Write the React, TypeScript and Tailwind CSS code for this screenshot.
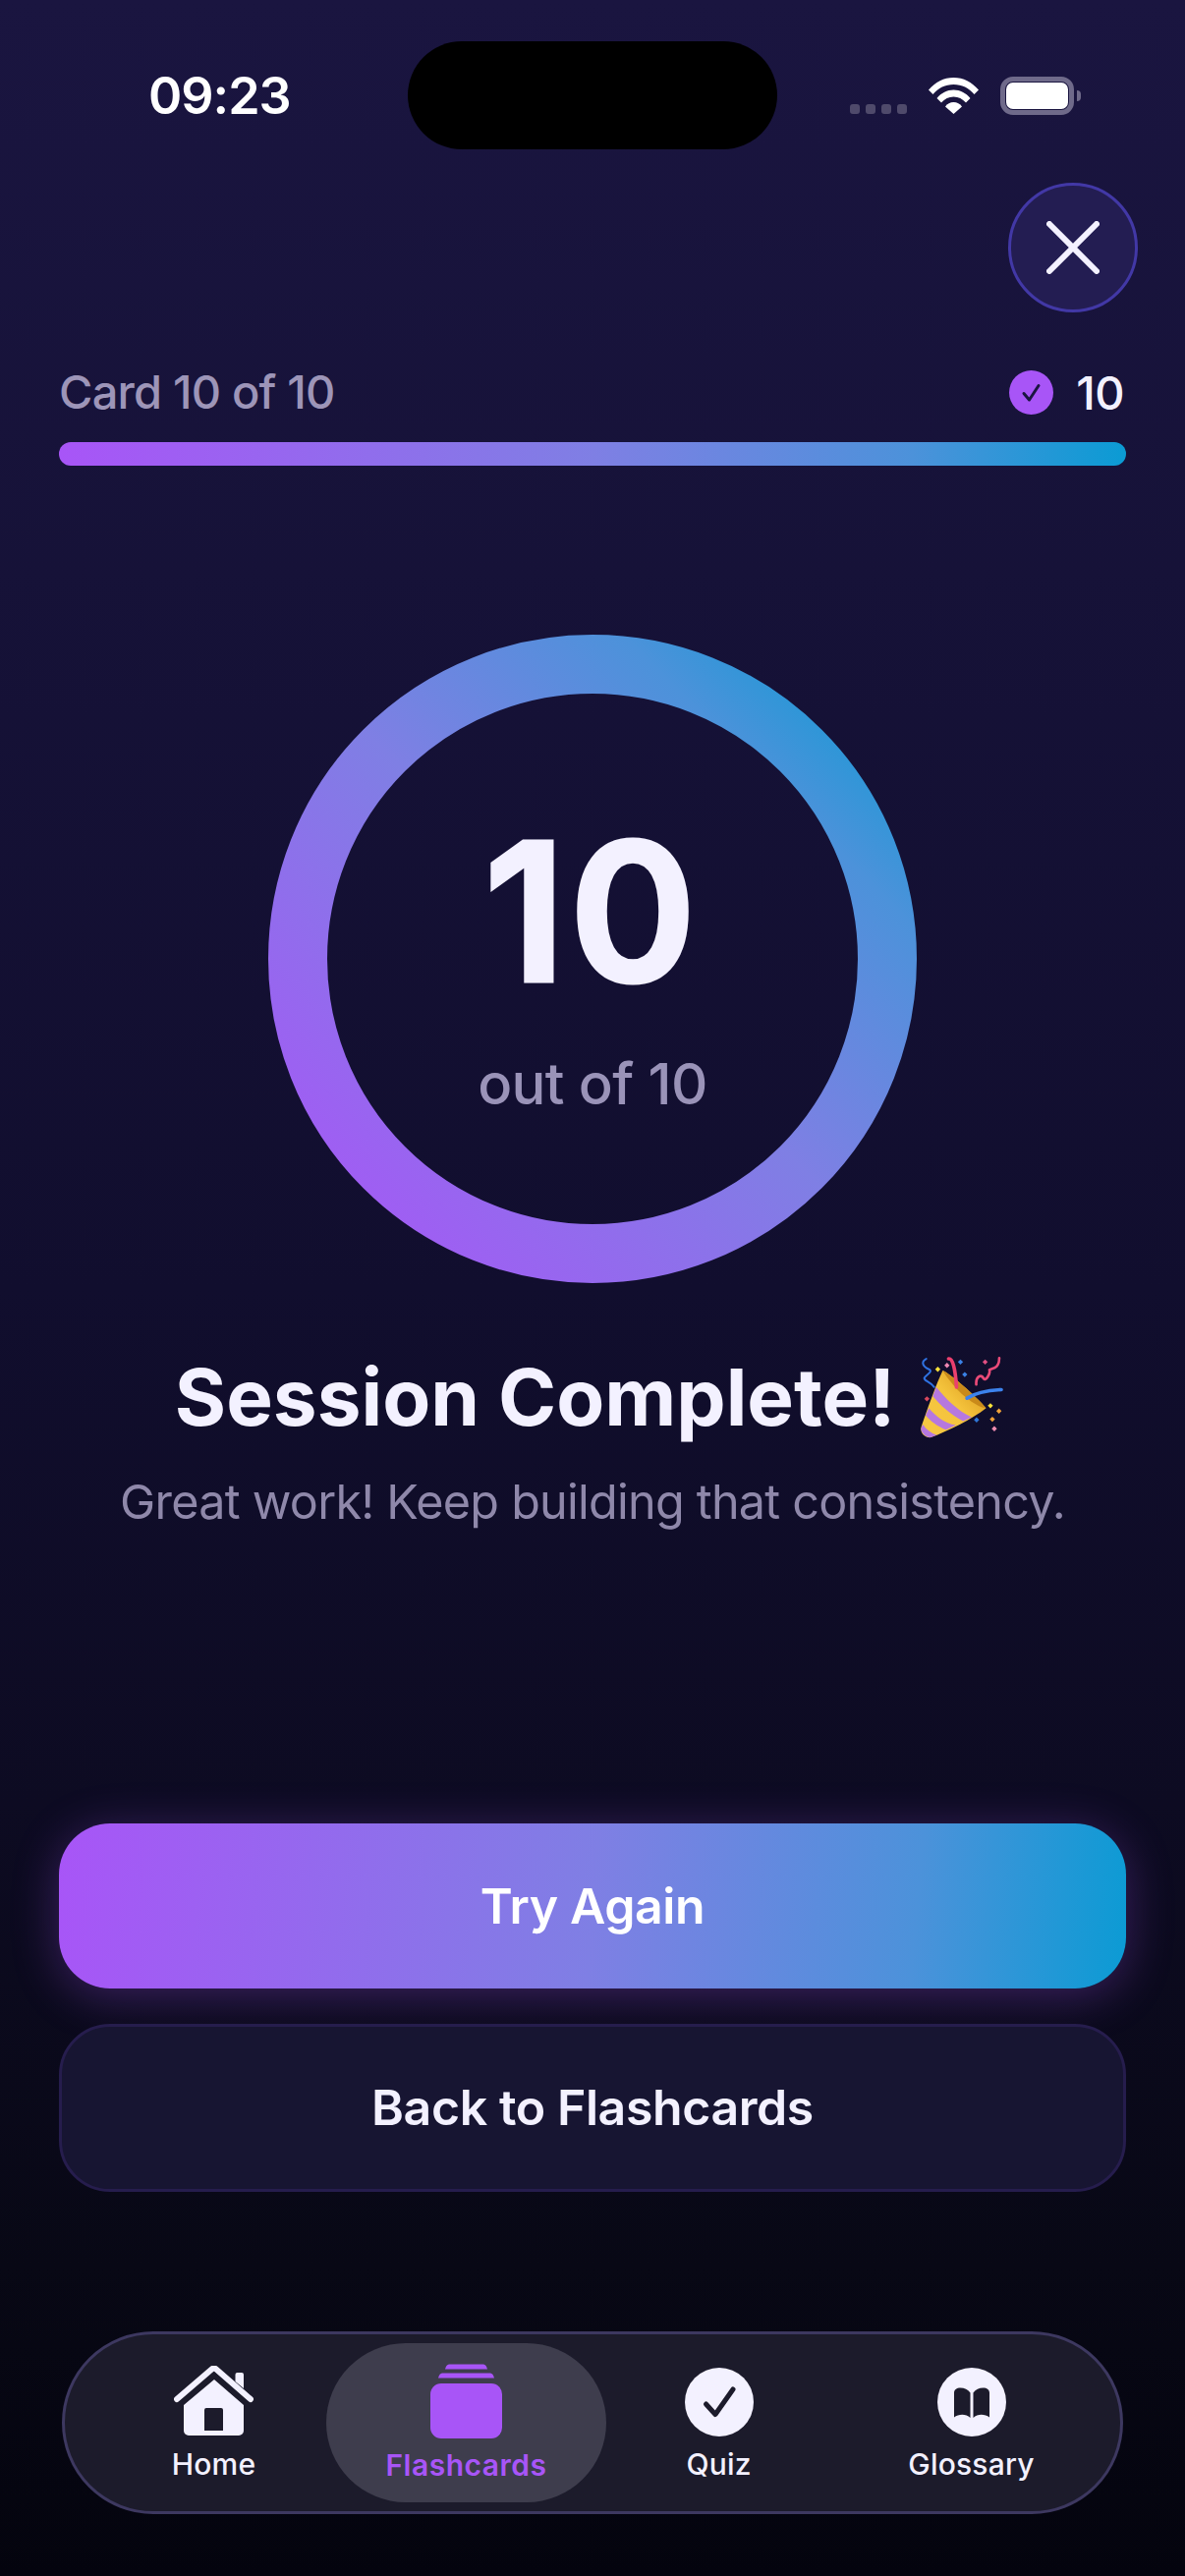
import React from 'react';

const tabs = ['Home', 'Flashcards', 'Quiz', 'Glossary'];

const HomeIcon = () => (
  <svg width="81" height="72" viewBox="0 0 81 72" fill="none">
    <path d="M62.500 9a2 2 0 0 1 2-2H69a2 2 0 0 1 2 2v14l-8.500-7z" fill="#f3f1ff" />
    <path d="M3 34 38.500 3.500a3.500 3.500 0 0 1 4.500 0L78 34" stroke="#f3f1ff" strokeWidth="6" strokeLinecap="round" strokeLinejoin="round" />
    <path fillRule="evenodd" clipRule="evenodd" d="M41 14 71 40v26a5 5 0 0 1-5 5H15a5 5 0 0 1-5-5V40zM33 43a2 2 0 0 0-2 2v21h19V45a2 2 0 0 0-2-2z" fill="#f3f1ff" />
  </svg>
);

const CardsIcon = () => (
  <svg width="73" height="76" viewBox="0 0 73 76" fill="#a855f7">
    <path d="M15 5.500c.5-2.500 2-5 4-5h35c2 0 3.500 2.500 4 5z" />
    <path d="M8 14.500c.5-2.500 2-5 4-5h49c2 0 3.500 2.500 4 5z" />
    <rect x="0" y="20" width="73" height="56" rx="11" />
  </svg>
);

const QuizIcon = () => (
  <svg width="70" height="70" viewBox="0 0 70 70">
    <circle cx="35" cy="35" r="35" fill="#f3f1ff" />
    <path d="M21.500 37 31 47.500 49 22" fill="none" stroke="#1c1b2b" strokeWidth="5" strokeLinecap="round" strokeLinejoin="round" />
  </svg>
);

const BookIcon = () => (
  <svg width="70" height="70" viewBox="0 0 70 70">
    <circle cx="35" cy="35" r="35" fill="#f3f1ff" />
    <path d="M33.500 25.500C31 22 27.500 20.500 23.500 20.500 19.500 20.500 17 22.500 17 25.500V50.500C21.500 47 29 46.500 33.500 51z" fill="#1c1b2b" />
    <path d="M36.500 25.500C39 22 42.500 20.500 46.500 20.500 50.500 20.500 53 22.500 53 25.500V50.500C48.500 47 41 46.500 36.500 51z" fill="#1c1b2b" />
  </svg>
);

const tabIcons: Record<string, React.ReactNode> = {
  Home: <HomeIcon />,
  Flashcards: <CardsIcon />,
  Quiz: <QuizIcon />,
  Glossary: <BookIcon />,
};

// party popper, no colour emoji font here so it is drawn by hand
const Popper = () => (
  <svg width="87" height="87" viewBox="80 60 260 260" fill="none" className="shrink-0">
    <defs>
      <linearGradient id="cone" x1="90" y1="300" x2="270" y2="130" gradientUnits="userSpaceOnUse">
        <stop offset="0" stopColor="#f6c944" />
        <stop offset="0.55" stopColor="#f4c33c" />
        <stop offset="1" stopColor="#d8961c" />
      </linearGradient>
      <clipPath id="coneClip">
        <path d="M150 108C175 118 250 185 282 222 240 255 170 290 112 312 92 310 80 296 85 278 105 220 130 150 150 108z" />
      </clipPath>
    </defs>
    <path d="M150 108C175 118 250 185 282 222 240 255 170 290 112 312 92 310 80 296 85 278 105 220 130 150 150 108z" fill="url(#cone)" />
    <g clipPath="url(#coneClip)">
      <path d="M130 158C160 195 195 230 238 250L212 262C172 240 140 210 120 186z" fill="#b678df" />
      <path d="M108 222C130 248 155 268 190 274L160 288C134 278 112 262 98 244z" fill="#b678df" />
      <path d="M90 272C100 288 115 298 132 304L112 314C98 310 88 300 82 286z" fill="#b678df" />
      <path d="M150 108C175 118 250 185 282 222 262 222 215 190 190 160 170 138 155 118 150 108z" fill="#c98a1a" />
    </g>
    <path d="M168 72C180 70 188 100 192 158" stroke="#ec3f6e" strokeWidth="11" strokeLinecap="round" />
    <path d="M224 192C255 172 290 168 328 166" stroke="#3c82ec" strokeWidth="11" strokeLinecap="round" />
    <path d="M100 72C82 82 90 96 108 104 122 112 100 120 94 130 92 140 110 140 124 158" stroke="#2f72e2" strokeWidth="6" strokeLinecap="round" />
    <path d="M252 150C250 125 268 118 274 132 280 142 296 118 292 106 300 100 322 104 322 70" stroke="#ea4a78" strokeWidth="8" strokeLinecap="round" strokeLinejoin="round" />
    <path d="M135 96l8 8-8 8-8-8z" fill="#fbe33a" />
    <path d="M163 84l8 8-8 8-8-8z" fill="#ef87b4" />
    <path d="M204 74l8 8-8 8-8-8z" fill="#3b82e6" />
    <path d="M217 112l8 8-8 8-8-8z" fill="#3b82e6" />
    <path d="M279 74l8 8-8 8-8-8z" fill="#e14f82" />
    <path d="M102 186l8 8-8 8-8-8z" fill="#d8485e" />
    <path d="M295 207l8 8-8 8-8-8z" fill="#fbe33a" />
    <path d="M321 223l8 8-8 8-8-8z" fill="#f0a238" />
    <path d="M301 248l8 8-8 8-8-8z" fill="#f0a238" />
    <path d="M253 250l8 8-8 8-8-8z" fill="#2f76d8" />
    <path d="M307 277l8 8-8 8-8-8z" fill="#f08cb0" />
  </svg>
);

export default function App() {
  return (
    <div className="w-[1206px] h-[2622px] overflow-hidden flex flex-col bg-[linear-gradient(180deg,#1a1540_0%,#110e2e_50%,#0d0b22_70%,#080815_88%,#04040e_100%)] font-['Inter',sans-serif] text-[#f3f1ff]">
      {/* status bar */}
      <div className="mt-[42px] h-[110px] grid grid-cols-[415px_376px_1fr] items-center shrink-0">
        <div className="pl-[151px] pt-[2px] text-[52px] leading-none font-semibold tracking-[-1px] text-white">09:23</div>
        <div className="h-[110px] rounded-[55px] bg-black" />
        <div className="flex items-end h-[39px] pl-[74px]">
          <div className="flex gap-[6px] mb-[1px]">
            <div className="w-[10px] h-[10px] rounded-[3px] bg-[#4f4a6b]" />
            <div className="w-[10px] h-[10px] rounded-[3px] bg-[#4f4a6b]" />
            <div className="w-[10px] h-[10px] rounded-[3px] bg-[#4f4a6b]" />
            <div className="w-[10px] h-[10px] rounded-[3px] bg-[#4f4a6b]" />
          </div>
          <svg width="51" height="37" viewBox="0 0 51 37" fill="white" className="ml-[22px] mb-[1px]">
            <path d="M0 12.500C7 4.500 15.500 0 25.500 0S44 4.500 51 12.500l-4.500 4.500C41 10.500 34 7 25.500 7S10 10.500 4.500 17z" />
            <path d="M8.500 21C13 15.500 19 12.500 25.500 12.500S38 15.500 42.500 21l-4.500 4.500C34.500 21.500 30.500 19.500 25.500 19.500S16.500 21.500 13 25.500z" />
            <path d="M17 29.500C19 26.500 22 25 25.500 25S32 26.500 34 29.500L25.500 37z" />
          </svg>
          <div className="ml-[22px] w-[75px] h-[39px] rounded-[13px] border-[5px] border-[#6f6a8a] p-[1px]">
            <div className="w-full h-full rounded-[7px] bg-white" />
          </div>
          <div className="ml-[3px] mb-[14px] w-[4px] h-[11px] rounded-r-[4px] bg-[#6f6a8a]" />
        </div>
      </div>

      {/* close */}
      <div className="mt-[34px] pr-[48px] flex justify-end shrink-0">
        <button className="w-[132px] h-[132px] rounded-full border-[3px] border-[#4238a6] bg-[#231d52] flex items-center justify-center">
          <svg width="54" height="54" viewBox="0 0 54 54" fill="none" stroke="#f3f1ff" strokeWidth="6" strokeLinecap="round">
            <path d="M3 3 51 51M51 3 3 51" />
          </svg>
        </button>
      </div>

      {/* progress */}
      <div className="mt-[56px] px-[60px] shrink-0">
        <div className="flex items-center justify-between h-[50px]">
          <span className="mt-[-2px] text-[47px] leading-none font-medium tracking-[-0.8px] text-[#9d95b8]">Card 10 of 10</span>
          <div className="flex items-center gap-[23px] pr-[2px]">
            <svg width="45" height="45" viewBox="0 0 45 45">
              <circle cx="22.500" cy="22.500" r="22.500" fill="#a855f7" />
              <path d="M15 23.500 20.500 30 30 15.500" fill="none" stroke="#1a1540" strokeWidth="3" strokeLinecap="round" strokeLinejoin="round" />
            </svg>
            <span className="text-[47px] leading-none font-medium tracking-[-0.5px]">10</span>
          </div>
        </div>
        <div className="mt-[26px] h-[24px] rounded-full bg-[linear-gradient(90deg,#a855f7_0%,#7f7fe4_50%,#4c92da_80%,#0b9bd4_100%)]" />
      </div>

      {/* score ring */}
      <div className="mt-[172px] relative w-[660px] h-[660px] self-center shrink-0 flex flex-col items-center">
        <svg width="660" height="660" viewBox="0 0 660 660" className="absolute inset-0">
          <defs>
            <linearGradient id="ring" x1="0" y1="1" x2="1" y2="0">
              <stop offset="0" stopColor="#a855f7" />
              <stop offset="0.5" stopColor="#7f7fe4" />
              <stop offset="0.8" stopColor="#4c92da" />
              <stop offset="1" stopColor="#0b9bd4" />
            </linearGradient>
          </defs>
          <circle cx="330" cy="330" r="300" fill="none" stroke="url(#ring)" strokeWidth="60" />
        </svg>
        <div className="mt-[172px] text-[194px] leading-[220px] font-semibold tracking-[5px] [-webkit-text-stroke:5px_#f3f1ff]">10</div>
        <div className="mt-[31px] text-[58px] leading-[68px] font-medium tracking-[-0.6px] text-[#9a93b8]">out of 10</div>
      </div>

      {/* heading */}
      <div className="mt-[66px] flex items-center justify-center gap-[25px] pr-[5px] h-[100px] shrink-0">
        <h1 className="text-[80px] leading-none font-bold">Session Complete!</h1>
        <Popper />
      </div>
      <p className="mt-[27px] text-center text-[48.500px] leading-[60px] tracking-[-0.75px] text-[#8f88aa] shrink-0">Great work! Keep building that consistency.</p>

      {/* buttons */}
      <div className="mt-[297px] px-[60px] flex flex-col gap-[36px] shrink-0">
        <button className="h-[168px] rounded-[52px] bg-[linear-gradient(95deg,#a855f7_0%,#7f7fe4_50%,#4c92da_80%,#0b9bd4_100%)] shadow-[0_8px_48px_rgba(168,85,247,0.3)] text-[50px] font-semibold tracking-[-0.4px] text-white">Try Again</button>
        <button className="h-[171px] rounded-[52px] border-[3px] border-[#261d4d] bg-[#171532] text-[50px] font-semibold tracking-[-0.4px]">Back to Flashcards</button>
      </div>

      {/* tab bar */}
      <div className="mt-[142px] ml-[63px] w-[1080px] h-[186px] rounded-[93px] border-[3px] border-[#3d3860] bg-[#1c1b2b] pl-[23px] grid grid-cols-[257px_257px_257px_257px] items-stretch py-[9px] shrink-0">
        {tabs.map((tab) => {
          const active = tab === 'Flashcards';
          return (
            <div key={tab} className={active ? 'flex flex-col items-center rounded-[81px] bg-[#3e3d4d] mx-[-14px] pt-[21px]' : 'flex flex-col items-center justify-end pb-[21px]'}>
              <div className={active ? 'h-[76px]' : 'h-[72px] flex items-end'}>{tabIcons[tab]}</div>
              <span className={active ? 'mt-[9px] text-[30px] leading-[36px] font-semibold tracking-[0.5px] text-[#a855f7]' : 'mt-[10px] text-[30px] leading-[36px] font-medium tracking-[0.2px]'}>{tab}</span>
            </div>
          );
        })}
      </div>
    </div>
  );
}
